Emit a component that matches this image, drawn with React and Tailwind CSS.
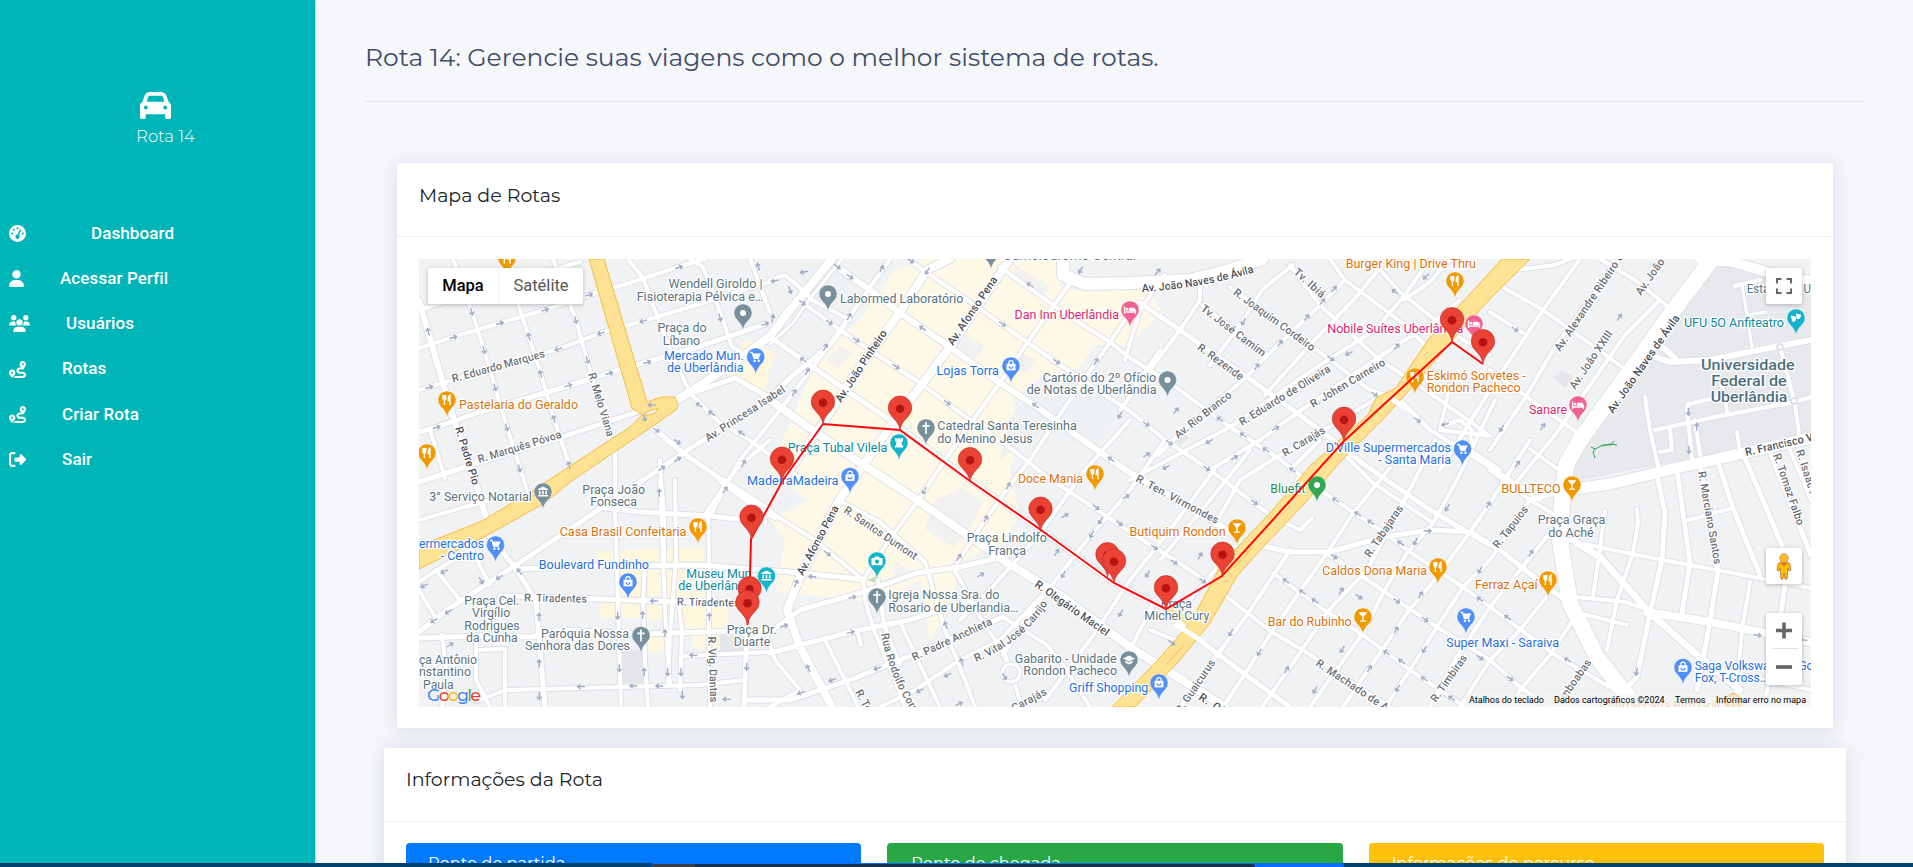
import React from "react";
import { FaCar, FaGaugeHigh, FaUser, FaUsers, FaRoute, FaRightFromBracket } from "react-icons/fa6";

const menu = [
  { icon: FaGaugeHigh, label: "Dashboard", gap: "pl-[91px]", size: "w-[17px]" },
  { icon: FaUser, label: "Acessar Perfil", gap: "pl-[60px]", size: "w-[15px]" },
  { icon: FaUsers, label: "Usuários", gap: "pl-[66px]", size: "w-[21px]" },
  { icon: FaRoute, label: "Rotas", gap: "pl-[62px]", size: "w-[17px]" },
  { icon: FaRoute, label: "Criar Rota", gap: "pl-[62px]", size: "w-[17px]" },
  { icon: FaRightFromBracket, label: "Sair", gap: "pl-[62px]", size: "w-[17px]" },
];

/* [width, points] */
const roads = [
  [4, "419,310 470,294 580,262"],
  [4, "419,348 453,337 500,323 545,310 589,295 623,285 678,267 705,259"],
  [4, "419,390 452,380 558,349 601,333 643,321 690,307 743,290 770,282"],
  [5, "419,432 437,427 477,413 568,386 609,373 647,362 710,343 765,324"],
  [5, "419,482 477,463 562,437 643,410"],
  [4, "419,520 490,500"],
  [6, "419,300 428,332 443,383 458,433 475,480 489,528"],
  [4, "453,259 472,312 484,350 495,387 507,427 520,468 530,500"],
  [4, "503,259 529,337 541,374 554,419 571,470"],
  [4, "553,259 576,320 587,360 610,440"],
  [4, "628,259 643,278 665,338 690,393"],
  [4, "690,259 703,267 722,317 732,347 752,358"],
  [4, "750,259 770,312"],
  [4, "430,430 445,478"],
  [8, "672,403 690,392 735,362 770,336 790,310 832,259"],
  [3, "770,344 792,324 812,296 842,259"],
  [5, "690,393 715,385 735,378 765,395 800,420"],
  [4, "690,393 720,423 745,437 770,455 800,478"],
  [5, "652,427 683,453 715,475 770,510"],
  [5, "419,632 450,608 513,567 603,507 683,453 770,398 790,378 830,345 845,325"],
  [4, "615,451 615,510 617,570 619,640 621,707"],
  [4, "660,460 661,480 664,513 664,565"],
  [5, "599,507 640,512 710,516 765,522"],
  [5, "515,569 600,566 700,565 790,572 850,578 863,580"],
  [5, "487,533 513,565 536,600 540,650 545,707"],
  [4, "470,545 482,570 490,585"],
  [4, "419,582 437,570 470,550"],
  [4, "419,590 437,620"],
  [4, "436,570 460,600"],
  [5, "500,596 600,599 680,602 740,603"],
  [5, "419,638 480,636 530,637 560,630 640,634 770,630"],
  [4, "442,635 446,670 442,707"],
  [4, "476,640 476,680 490,707"],
  [4, "476,650 505,649 505,707"],
  [4, "480,700 505,690 580,688 700,685 745,680"],
  [4, "645,565 643,600 645,660 648,707"],
  [4, "660,480 663,560 666,630 668,660 670,685"],
  [4, "675,480 676,560 670,635 668,685"],
  [4, "708,510 709,560 709,630 710,707"],
  [4, "683,656 770,652"],
  [4, "680,690 682,630 678,600"],
  [4, "706,513 735,470 770,440"],
  [5, "748,625 746,655 744,707"],
  [4, "765,630 775,660 800,690"],
  [6, "720,480 760,510 775,517"],
  [5, "745,700 790,700 850,680 913,655 1003,617"],
  [5, "745,642 770,632 800,610 860,593 917,573 960,567 1003,557"],
  [5, "770,653 850,632 910,620 970,600"],
  [4, "770,707 800,690"],
  [6, "837,267 870,290 900,313 950,347 1000,383 1037,407 1097,450 1130,473 1143,480 1217,523 1240,540"],
  [4, "803,303 840,330 897,368 920,383 973,422 1013,450 1047,477 1090,505 1130,532 1190,570 1227,597 1273,633 1303,650 1363,690 1390,707"],
  [5, "770,337 813,367 850,393 887,418 970,480 1041,530 1114,583 1166,609 1190,633 1243,673 1290,707"],
  [8, "770,400 815,432 860,463 887,480 920,502 1003,560 1063,597 1130,647 1225,707"],
  [4, "913,263 970,302 1027,342 1060,365 1100,392 1130,411 1165,440 1210,470 1270,515 1300,530"],
  [4, "1000,267 1070,317 1110,342 1130,358 1170,383 1230,427 1277,457 1300,475"],
  [4, "770,512 815,540 863,580"],
  [4, "840,501 880,522 925,562 945,630 965,680 975,707"],
  [4, "953,567 980,617 1005,655 1010,680"],
  [4, "1003,617 1047,645 1065,668 1090,707"],
  [8, "950,259 927,270 900,312 853,377 823,423 783,480"],
  [8, "1010,259 950,347 903,410 883,437 860,470 838,502 800,577 787,610 800,647 832,707"],
  [4, "890,259 840,330 813,367 780,410 740,460 710,516"],
  [4, "1070,283 1027,343 1000,383 973,420 947,457 917,502 887,543 863,580"],
  [4, "1127,317 1110,342 1063,410 1030,460 1010,485 983,523 957,563"],
  [4, "850,320 812,300 805,292 785,275 770,280"],
  [4, "863,580 865,600 874,630 895,680 905,707"],
  [4, "878,580 884,625 900,665"],
  [4, "900,622 920,665 940,707"],
  [4, "825,640 850,690 858,707"],
  [4, "857,630 861,645"],
  [4, "1130,420 1085,470 1040,533 990,590 960,620"],
  [4, "1165,440 1130,490 1087,540 1025,620 1003,655"],
  [4, "1214,470 1170,530 1130,580 1090,640 1045,700"],
  [4, "1240,540 1215,570 1190,600"],
  [4, "1047,590 1000,640 960,660 915,690 880,707"],
  [4, "1005,655 1020,700"],
  [12, "1063,259 1063,275 1085,284 1130,283 1190,280 1230,270 1262,259"],
  [5, "1140,303 1180,330 1247,377 1297,413 1333,440 1365,465 1430,510 1490,545"],
  [4, "1200,287 1200,300 1180,330 1150,370 1120,410"],
  [4, "1230,287 1317,350 1370,390 1400,400 1430,430 1490,467 1540,500"],
  [4, "1202,305 1265,353"],
  [4, "1290,265 1320,305 1363,345 1380,360 1410,380 1440,400 1490,436"],
  [4, "1330,259 1345,280 1405,325 1430,350"],
  [4, "1370,259 1400,292 1433,318 1455,340"],
  [4, "1125,360 1140,310 1165,275"],
  [4, "1293,265 1262,290 1240,325 1210,365"],
  [4, "1345,280 1320,305 1280,343 1243,380 1180,433 1158,455"],
  [4, "1378,270 1358,295 1310,345 1265,395"],
  [4, "1430,259 1405,295 1375,330 1320,365 1230,427 1130,480"],
  [4, "1460,300 1430,325 1400,343 1297,413 1260,440 1210,470"],
  [4, "1450,259 1430,282 1404,300"],
  [4, "1382,395 1333,425 1277,457 1240,480 1215,525"],
  [4, "1160,350 1130,395"],
  [4, "1490,355 1455,335"],
  [4, "1250,450 1210,500 1160,560"],
  [4, "1300,475 1290,495 1260,530"],
  [5, "1258,545 1290,552 1330,552 1383,537 1430,530 1470,532 1500,550 1548,588 1570,603"],
  [4, "1273,573 1327,612 1363,635 1410,670 1465,707"],
  [4, "1327,553 1363,577 1407,607 1437,627 1490,660 1520,687 1550,707"],
  [4, "1320,490 1380,530 1410,552 1463,587 1490,607 1555,655 1620,693"],
  [4, "1340,450 1373,483 1433,523"],
  [4, "1390,468 1353,513 1327,553 1273,630 1243,677 1223,707"],
  [4, "1435,440 1403,503 1367,570 1327,612 1300,653 1262,707"],
  [4, "1495,400 1457,480 1433,523 1407,553 1383,593 1363,633 1310,707"],
  [4, "1530,440 1490,503 1470,532 1437,577 1407,613 1380,653 1343,707"],
  [4, "1530,500 1490,560 1463,587 1437,627 1410,670 1385,707"],
  [4, "1560,520 1520,570 1490,607 1455,660 1430,707"],
  [4, "1548,595 1520,630 1490,660 1460,707"],
  [4, "1573,620 1550,655 1520,690 1510,707"],
  [4, "1290,550 1247,615 1217,655 1180,707"],
  [4, "1150,630 1175,640 1190,633"],
  [4, "1155,600 1130,650"],
  [4, "1300,530 1312,518"],
  [4, "1320,440 1290,470"],
  [4, "1450,385 1440,430 1490,436"],
  [4, "1440,430 1445,425 1460,420 1472,430 1470,450 1500,470"],
  [4, "1580,259 1543,310 1490,390 1440,470"],
  [4, "1620,259 1600,285 1553,350 1527,395 1490,450"],
  [4, "1660,300 1625,335 1590,385 1555,435 1510,490"],
  [4, "1490,280 1543,310 1625,369"],
  [4, "1600,259 1635,280 1670,308"],
  [4, "1490,312 1523,333"],
  [4, "1490,370 1527,397 1578,433"],
  [4, "1530,449 1567,476"],
  [4, "1490,470 1530,500 1560,518 1577,543"],
  [4, "1515,270 1555,265 1570,259"],
  [16, "1712,259 1670,315 1620,385 1580,440 1566,465 1562,500 1560,540 1570,603 1597,657 1640,712"],
  [10, "1700,259 1733,262 1780,276 1811,281"],
  [11, "1566,490 1610,484 1677,468 1811,438"],
  [5, "1530,500 1566,490"],
  [6, "1650,355 1670,362 1710,360 1780,346 1811,340"],
  [6, "1660,345 1675,358"],
  [4, "1780,346 1790,385 1795,405 1800,440"],
  [4, "1795,402 1811,397"],
  [4, "1735,286 1760,280"],
  [3, "1742,285 1747,315 1752,347"],
  [3, "1747,315 1766,312"],
  [4, "1645,397 1650,430 1660,475"],
  [4, "1655,430 1720,416 1795,402"],
  [4, "1687,410 1688,404 1725,396 1720,380"],
  [4, "1687,410 1692,460"],
  [4, "1670,430 1672,450 1660,452"],
  [4, "1695,420 1700,455"],
  [4, "1737,432 1740,452"],
  [4, "1725,395 1727,413"],
  [7, "1577,543 1600,557 1650,613 1703,660 1740,690"],
  [8, "1647,612 1710,622 1811,642"],
  [4, "1567,540 1603,548 1663,560 1717,570 1770,580 1811,588"],
  [4, "1577,597 1625,602 1643,608"],
  [4, "1583,614 1627,625"],
  [4, "1605,511 1600,548 1593,597"],
  [4, "1637,509 1638,523 1633,553 1617,600 1607,650"],
  [5, "1657,475 1665,513 1662,560 1650,613 1637,677 1620,695"],
  [5, "1677,470 1690,563 1682,613"],
  [4, "1685,521 1733,508"],
  [5, "1700,464 1718,570 1710,622 1697,690"],
  [5, "1718,462 1733,508 1760,575"],
  [5, "1745,458 1784,550 1785,585 1777,640"],
  [5, "1770,452 1811,555"],
  [4, "1750,582 1742,630 1735,707"],
  [4, "1790,450 1811,500"],
  [4, "1700,665 1765,680 1811,690"],
  [4, "1770,680 1763,707"],
];

const tileArrows = [
  [410, 250, [[807,52,-17],[405,180,-17],[270,220,-17],[130,262,-17],[445,297,163],[573,250,163],[700,213,163],[537,135,-17],[475,407,-17],[598,370,-17],[712,337,-17],[58,412,-17],[55,245,-106],[185,185,73],[222,300,73],[255,412,73],[290,532,73],[328,655,73],[357,260,-106],[392,372,-106],[432,507,-106],[477,645,-106],[497,210,73],[532,330,73],[930,203,73],[1045,50,-106],[1065,222,-17],[80,532,-17],[725,465,180],[703,503,73],[755,655,-35],[868,465,-145],[905,490,-145],[738,540,35],[802,575,35],[803,628,-35],[995,550,-145],[1000,640,-60]]],
  [770, 250, [[102,66,170],[14,92,170],[60,120,70],[8,205,-80],[202,50,35],[240,80,35],[97,158,35],[178,217,35],[258,270,35],[335,57,-60],[422,32,35],[472,63,120],[237,200,-60],[166,292,-60],[112,365,-60],[72,428,-60],[100,330,-145],[378,350,35],[458,235,-145],[780,105,-145],[697,222,35],[860,335,35],[932,60,120],[532,458,35],[797,467,-145],[978,335,-60],[1050,495,120],[1023,628,-145]]],
  [1130, 250, [[83,65,-50],[340,215,120],[450,280,-50],[380,350,-50],[530,203,-50],[577,155,-50],[612,118,-50],[602,325,35],[657,310,155],[800,290,-50],[795,125,-145],[888,80,135],[733,432,35],[862,510,35],[945,523,165],[138,482,-50],[48,522,35],[118,578,35],[270,508,-145],[340,555,-145],[408,600,-145],[238,574,150],[437,535,-30],[108,652,150],[313,623,-30],[50,615,-30],[230,655,35],[488,660,-145]]],
  [1490, 250, [[388,202,-57],[75,237,35],[158,530,-57],[35,535,123],[82,642,-57],[595,485,90],[620,530,-90],[597,600,90]]],
  [410, 480, [[103,275,155],[43,317,155],[115,395,150],[72,422,150],[213,302,60],[268,292,150],[328,275,-125],[120,495,-30],[387,410,-90],[388,550,-90],[388,648,90],[623,407,90],[698,405,-90],[628,565,90],[703,575,-90],[513,620,180],[670,618,180],[748,618,180],[850,526,180],[765,460,-90],[773,577,90],[813,577,90],[817,645,90],[898,410,-90],[732,363,180],[950,658,180],[1010,560,90],[748,38,-90],[945,30,-55]]],
  [770, 480, [[172,220,35],[127,290,-175],[78,310,-65],[247,352,-15],[242,457,-15],[42,438,-15],[115,565,-115],[187,600,160],[93,638,160],[323,565,160],[463,32,120],[647,117,-60],[567,232,-60],[715,18,-60],[632,285,-30],[880,283,120],[860,217,-60],[527,436,-110],[575,545,-110],[533,585,155],[450,632,155],[567,672,-25],[885,107,-30],[978,82,35],[1048,130,35],[965,163,120],[992,122,120],[1068,50,-30],[1052,400,120],[703,590,60]]],
  [1130, 480, [[373,67,35],[73,202,35],[132,246,35],[218,302,35],[53,282,120],[210,228,-60],[125,488,35],[303,458,120],[388,517,120],[470,570,-60],[555,630,120],[617,60,-145],[683,102,-145],[722,127,-145],[893,153,0],[812,190,-145],[857,185,120],[952,83,120],[1075,75,-60],[612,230,35],[468,303,-145],[517,336,-145],[555,363,-145],[633,333,-60],[687,350,35],[800,362,35],[872,345,-60],[885,418,35],[798,450,-60],[637,508,120],[718,566,-60],[770,518,-145],[815,545,-145],[883,508,120],[883,597,-145],[803,625,120],[1050,270,120],[1050,358,-145],[1050,533,35],[965,655,-145]]],
  [1490, 480, [[123,220,-57],[53,413,-145],[233,540,-145],[60,595,35],[440,575,100],[803,465,8],[940,480,-172]]],
];

const GREY = "#78909c", BLUE = "#4f8ff7", ORANGE = "#f29900", TEAL = "#12b5cb", PINK = "#f06292", GREEN = "#34a853";
const pins = [
  [507,258.5,ORANGE,"food"],[447,400,ORANGE,"food"],[427,453,ORANGE,"food"],[755.7,357,BLUE,"cart"],[743,313,GREY,"dot"],
  [828,294,GREY,"dot"],[991,252,GREY,"dot"],[1130,310,PINK,"bed"],[1011,366,BLUE,"bag"],[926,428,GREY,"cross"],[899,443,TEAL,"castle"],
  [850,476.5,BLUE,"bag"],[1095,474,ORANGE,"food"],[1167.5,380,GREY,"dot"],[1455,281,ORANGE,"food"],[1474,324,PINK,"bed"],[1415,377,ORANGE,"food"],
  [1462.5,449,BLUE,"cart"],[1317,485,GREEN,"dot"],[1578,405,PINK,"bed"],[1796,318,TEAL,"mask"],[543,492,GREY,"museum"],[495.5,545,BLUE,"cart"],
  [698,527,ORANGE,"food"],[628,582,BLUE,"bag"],[766.5,576,TEAL,"museum"],[641,635.5,GREY,"cross"],[877,561,TEAL,"camera"],[877,597,GREY,"cross"],
  [1129,660,GREY,"cap"],[1237,528,ORANGE,"glass"],[1159,683,BLUE,"bag"],[1363,617,ORANGE,"glass"],[1438,567,ORANGE,"food"],[1466,617,BLUE,"cart"],
  [1572,485,ORANGE,"glass"],[1548,580,ORANGE,"food"],[1683,667.5,BLUE,"bag"],[1733,702,ORANGE,"food"],
];

const glyphs = {
  dot: <circle r="3" fill="#fff" />,
  food: <path d="M-4-5v3.2c0 1 .6 1.7 1.4 1.9V5M-1.2-5v3.2c0 1-.6 1.7-1.4 1.9M-2.6-5v4M3 5V-4.8C1.6-4 1.2-2 1.2.6H3" fill="none" stroke="#fff" strokeWidth="1.4" />,
  cart: <g fill="none" stroke="#fff" strokeWidth="1.3"><path d="M-5.5-4.5h2l2 5.8h4.8" /><path d="M-2.8-2.8h7l-1.4 3h-4.8z" fill="#fff" /><circle cx="-1" cy="3.8" r=".6" /><circle cx="3" cy="3.8" r=".6" /></g>,
  bag: <g><path d="M-4.5-2.2h9v6.6h-9z" fill="#fff" /><path d="M-2.2-2v-1.2a2.2 2.2 0 0 1 4.4 0V-2" fill="none" stroke="#fff" strokeWidth="1.2" /><path d="M-2 .2a2 2 0 0 0 4 0" fill="none" stroke={BLUE} strokeWidth="1.1" /></g>,
  cross: <path d="M0-6V6M-3.6-2.2h7.2" stroke="#fff" strokeWidth="1.7" />,
  bed: <g><path d="M-5.5-3.5V4M-5.5 2H5.5M5.5 4V0" stroke="#fff" strokeWidth="1.3" fill="none" /><circle cx="-3" cy="-.8" r="1.4" fill="#fff" /><path d="M-1-2.3h4.5a2 2 0 0 1 2 2V1H-1z" fill="#fff" /></g>,
  castle: <path d="M-4-5h1.8v1.3h1.3V-5H.9v1.3h1.3V-5H4v3.5H2.6L3 2.5H4.2V4.6H-4.2V2.5H-3l.4-4H-4z" fill="#fff" />,
  museum: <path d="M0-5.5l5 2.6v1H-5v-1zM-4-1.2h1.6v3.6H-4zM-.8-1.2H.8v3.6H-.8zM2.4-1.2H4v3.6H2.4zM-5 3H5v1.6H-5z" fill="#fff" />,
  camera: <g><path d="M-5.5-3h2.7l1-1.5h3.6l1 1.5h2.7V4.2h-11z" fill="#fff" /><circle cy=".6" r="2.1" fill={TEAL} /></g>,
  mask: <g fill="#fff"><path d="M-.2-4.5L5-3.6C5 0 3.6 1.4 1 1z" /><path d="M-5.2-2.4L.4-1.2C.4 2.6-1 4.8-3.8 3.6z" /></g>,
  cap: <path d="M0-4.5l6 3-6 3-6-3zM-3.6.6L0 2.4 3.6.6v2.2L0 4.6l-3.6-1.8z" fill="#fff" />,
  glass: <path d="M-4.5-4.8h9L.7-.2V3.4h2.2v1.3h-5.8V3.4h2.2V-.2z" fill="#fff" />,
};

const C = { g: "#5b7380", b: "#1f70e0", o: "#d9730d", t: "#0d8a99", p: "#e0246f", v: "#1e8e4a" };
/* [colour, x, baseline, width, text] */
const labels = [
  ["g",668.5,288.3,94,"Wendell Giroldo |"],["g",636.7,300.7,126.5,"Fisioterapia Pélvica e…"],["g",657.5,332,49,"Praça do"],["g",662.7,344.5,37.5,"Líbano"],
  ["b",664,360,79.5,"Mercado Mun."],["b",667,372,76.5,"de Uberlândia"],["o",459,409,119,"Pastelaria do Geraldo"],
  ["g",840,302.5,123.5,"Labormed Laboratório"],["g",1003,259.5,133,"Camelódromo Central"],["p",1014.5,318.7,104.5,"Dan Inn Uberlândia"],["b",936.5,375,62.3,"Lojas Torra"],
  ["g",1042.7,381.7,113.5,"Cartório do 2º Ofício"],["g",1026.7,394.3,130,"de Notas de Uberlândia"],["g",937.3,430.3,139.5,"Catedral Santa Teresinha"],["g",937.3,442.7,95.5,"do Menino Jesus"],
  ["t",787.7,451.7,99.7,"Praça Tubal Vilela"],["b",747,485,91.5,"MadeiraMadeira"],["o",1018,482.5,65,"Doce Mania"],
  ["o",1345.7,268.3,130.3,"Burger King | Drive Thru"],["p",1327.3,332.7,136,"Nobile Suítes Uberlândia"],["o",1426.7,379.5,99,"Eskimó Sorvetes -"],["o",1426.7,391.7,94,"Rondon Pacheco"],
  ["b",1325.7,452,125.3,"D'Ville Supermercados"],["b",1378.3,464.3,72.7,"- Santa Maria"],["p",1529,414.3,38,"Sanare"],["t",1684,326.7,100,"UFU 5O Anfiteatro"],["g",1746.7,293,78,"Estádio da UFU"],
  ["g",429.3,501,102.4,"3° Serviço Notarial"],["g",582.3,494,62.7,"Praça João"],["g",590.3,506.3,46.7,"Fonseca"],["o",559.7,536,126.6,"Casa Brasil Confeitaria"],
  ["b",419,547.7,65,"ermercados"],["b",440.7,560,43.3,"- Centro"],["b",538.7,569,110.3,"Boulevard Fundinho"],["t",686.3,578,68.4,"Museu Mun."],["t",678.3,590.3,76.5,"de Uberlândia"],
  ["g",464.3,604.7,55,"Praça Cel."],["g",472,617.3,38.3,"Virgílio"],["g",464.3,629.7,55.4,"Rodrigues"],["g",466,642.3,51.7,"da Cunha"],["g",541,638,88,"Paróquia Nossa"],["g",525,650.3,105,"Senhora das Dores"],
  ["g",419,664,58,"ça Antônio"],["g",419,676.3,52,"nstantino"],["g",423,688.7,30.7,"Paula"],["g",726.7,634,50,"Praça Dr."],["g",733.7,646.3,36.5,"Duarte"],
  ["g",966.7,542,80.3,"Praça Lindolfo"],["g",988.3,554.7,37.7,"França"],["g",888.3,599.3,111,"Igreja Nossa Sra. do"],["g",888.3,612,130,"Rosario de Uberlandia…"],
  ["g",1014.7,662.7,102,"Gabarito - Unidade"],["g",1023.3,675,93.7,"Rondon Pacheco"],["b",1069,691.5,79.3,"Griff Shopping"],
  ["v",1270.3,492.7,35,"Bluefit"],["o",1129.5,536.3,96.2,"Butiquim Rondon"],["g",1160.7,607.7,31.3,"Praça"],["g",1144.3,619.7,65,"Michel Cury"],
  ["o",1322.3,575,104.7,"Caldos Dona Maria"],["o",1267.7,626,84,"Bar do Rubinho"],["b",1446.3,646.7,112.7,"Super Maxi - Saraiva"],["o",1475,588.7,62.7,"Ferraz Açaí"],
  ["o",1501.3,492.7,59.4,"BULLTECO"],["g",1537.7,524.3,67.6,"Praça Graça"],["g",1548.3,536.7,45.4,"do Aché"],["b",1694.7,670,124,"Saga Volkswagen - Gol,"],["b",1694.7,682.3,73.3,"Fox, T-Cross…"],
  ["o",1600,710,120,"Churrascaria Rim Grill"],
];

/* [x, y, angle, width, text, major] */
const streets = [
  [453,382.5,-15.5,96,"R. Eduardo Marques"],[588,374,73,66,"R. Melo Viana"],[479,463,-17,87,"R. Marquês Póvoa"],[708,442,-33,93,"Av. Princesa Isabel"],[455,428,73,60,"R. Padre Pio",1],
  [841,403,-56.5,84,"Av. João Pinheiro",1],[953,346,-56,80,"Av. Afonso Pena",1],[1293,273,42,38,"Tv. Ibiá"],[1232.5,294,36,98,"R. Joaquim Cordeiro"],[1200,310,37,78,"Tv. José Camim"],
  [1196.5,349,36,54,"R. Rezende"],[1178,439,-38,69,"Av. Rio Branco"],[1242,426,-31.6,105,"R. Eduardo de Oliveira"],[1313,408,-30.7,85,"R. Johen Carneiro"],[1285,457,-31,48,"R. Carajás"],
  [1560,352,-56,116,"Av. Alexandre Ribeiro G"],[1575,390,-56,68,"Av. João XXIII"],[1641,296,-55,42,"Av. João"],[1613,414,-55,117,"Av. João Naves de Ávila",1],[1746,456,-13,90,"R. Francisco Vicen",1],
  [1698,472,80,94,"R. Marciano Santos"],[1773,455,71,75,"R. Tomaz Falbo"],[1796,451,72,60,"R. Isaac Ara"],[524,601.5,1,63,"R. Tiradentes"],[676.7,605.5,1,63,"R. Tiradentes"],
  [708,636.5,88,66,"R. Vig. Dantas"],[803,576,-62,77,"Av. Afonso Pena",1],[843,512,34,86,"R. Santos Dumont"],[1034,586,35,88,"R. Olegário Maciel",1],[914,661,-25,87,"R. Padre Anchieta"],
  [855,692,62,50,"R. Tenente"],[1014,712,-28,38,"Carajás"],[1135,481,28,92,"R. Ten. Virmondes"],[1370,558,-56,60,"R. Tabajaras"],[1181,714,-56,62,"R. Guaicurus"],[1198,699,33,80,"R. Olegário M",1],
  [1315,665,33.5,96,"R. Machado de Ass"],[1436,703,-55,55,"R. Timbiras"],[1498,549,-52,50,"R. Tapuios"],[1562,705,-55,52,"Emboabas"],
];

const markers = [[1483,364],[1452,342],[1344,441.5],[1222.5,576.5],[1166,610],[1107.5,577],[1114,583.5],[1040.5,531.5],[970,482],[900,430.5],[823,424.5],[782,481.5],[751.5,539.5],[749.5,611],[747.5,625]];

function RouteMap() {
  const shape = "M0 0C-1-7.5-4.5-10-8.4-14.6A11.7 11.7 0 1 1 8.4-14.6C4.5-10 1-7.5 0 0z";
  return (
    <svg className="block h-full w-full" viewBox="419 259 1392 448" fontFamily="Roboto, sans-serif">
      <defs>
        <path id="arrow" d="M-4 0H3M.6-2.2L3.4 0 .6 2.2" fill="none" stroke="#a3abc8" strokeWidth="1.4" />
        <path id="avila" d="M1142 292Q1205 288 1258 271" />
        <path id="carrijo" d="M976 662Q1025 642 1050 600" />
        <path id="rodolfo" d="M881 634Q890 680 914 714" />
      </defs>
      <rect x="419" y="259" width="1392" height="448" fill="#f0f2f4" />
      <path d="M1712 262L1811 285V435L1570 482 1585 435 1645 350Z" fill="#e7e9ed" />
      <path d="M893 272L925 259H1055L1062 290H1148L1162 312 1130 345 1095 345 1068 385 1040 378 1012 400 1022 430 1010 470 1020 515 1000 545 965 560 945 615 930 642 920 580 900 590 870 602 776 592 785 540 770 520 808 500 770 470 800 400 822 350 860 320Z" fill="#fef8e6" />
      <path d="M1040 378l35-10 50 30-30 50-50-18-45 30 5-35zM1020 352l15 8-8 14-14-7zM840 346l12 6-14 16-12-8zM936 500l25-12 22 14-12 25-18 20-28-18zM780 500l12-8 4 6-12 12zM800 270l30-10 20 22-25 32-28-20zM895 560l18 12-20 10zM965 335l20 10-8 14-22-12zM1012 262l18 12 20 12-8 12-25-18z" fill="#eef0f2" opacity=".8" />
      <path d="M598 551l106-4v15l-106 3zM617 570h24v26h-24zM648 570h14v26h-14zM666 570h40v28h-40zM600 603h40v15h-40zM648 604h14v17h-14zM666 604h11v15h-11zM682 604h45v25h-45zM693 635h27v14h-27zM726 378l18-38 30 12-10 42zM648 636h16v16h-16z" fill="#fef6dd" />
      <path d="M620 650h23v33h-23zM720 635h30v16h-30zM1553 378l8-8 12 6-7 12zM1175 440l10-6 4 4-10 7z" fill="#e4e6ea" />
      <path d="M867 580l10-4 2 8z" fill="#bfe3c6" />
      <g fill="none" strokeLinejoin="round" strokeLinecap="round">
        {roads.map(([w, p], i) => <polyline key={i} points={p} stroke="#dcdfe7" strokeWidth={w + 1.8} />)}
        {roads.map(([w, p], i) => <polyline key={i} points={p} stroke="#fff" strokeWidth={w} />)}
        <circle cx="1011" cy="673" r="9" stroke="#d9dce5" strokeWidth="5" fill="#f0f2f4" />
        <circle cx="1011" cy="673" r="9" stroke="#fff" strokeWidth="3.4" />
        <circle cx="1780" cy="347" r="3" stroke="#d9dce5" strokeWidth="1.5" />
        <circle cx="1794" cy="401" r="3" stroke="#d9dce5" strokeWidth="1.5" />
      </g>
      <g strokeLinejoin="round">
        <path d="M589 259H604L647 402 662 397H675L678 404 677 409 650 428 573 480 543 504 484 537 419 569V546L482 521 535 489 630 427 642 415 632 408Z" fill="#fde293" stroke="#f6bb42" strokeWidth="1" />
        <path d="M646 412l12-4-3 5-9 3z" fill="#f0f2f4" stroke="#f6bb42" />
        <path d="M1502 259H1530L1489 300 1466 325 1420 378 1387 415 1340 462 1305 503 1265 545 1237 576 1210 623 1180 660 1135 707H1112L1158 660 1190 623 1215 577 1220 566 1270 513 1310 466 1368 415 1376 398 1396 388 1428 340Z" fill="#fde293" stroke="#f6bb42" strokeWidth="1" />
        <path d="M1161 608l26 17 6-1-5-8-22-9z" fill="#fde293" />
        <path d="M1252 548L1234 568M1184 645L1166 665" stroke="#f6bb42" strokeWidth="1" />
      </g>
      <g fill="none" stroke="#fff" strokeWidth="5"><path d="M1390 398L1412 412M1175 624L1205 643M1130 647L1150 660" /></g>
      <path d="M1591 447l4 2-2 3 2 6M1595 449l8-4h8l3-4M1602 446l8-2 7 1" fill="none" stroke="#2ea455" />
      {tileArrows.map(([ox, oy, list]) => list.map(([x, y, a]) => (
        <use key={`${ox}-${oy}-${x}-${y}`} href="#arrow" transform={`translate(${ox + x / 3} ${oy + y / 3}) rotate(${a})`} />
      )))}
      <g paintOrder="stroke" stroke="#fff" strokeWidth="2.6" strokeLinejoin="round">
        <g fontSize="11" fontWeight="500">
          {streets.map(([x, y, a, w, t, major]) => (
            <text key={t + x} transform={`translate(${x} ${y}) rotate(${a})`} textLength={w} fill={major ? "#4a4e55" : "#6b6f76"}>{t}</text>
          ))}
          <text fill="#4a4e55"><textPath href="#avila" textLength="114">Av. João Naves de Ávila</textPath></text>
          <text fill="#6b6f76"><textPath href="#carrijo" textLength="94">R. Vital José Carrijo</textPath></text>
          <text fill="#6b6f76"><textPath href="#rodolfo" textLength="84">Rua Rodolfo Corr</textPath></text>
        </g>
        <g fontSize="12.5">
          {labels.map(([c, x, y, w, t]) => <text key={t + x} x={x} y={y} textLength={w} lengthAdjust="spacingAndGlyphs" fill={C[c]}>{t}</text>)}
        </g>
        <g fontSize="15.5" fontWeight="500" fill="#4a7080">
          <text x="1701" y="370.3" textLength="93.7" lengthAdjust="spacingAndGlyphs">Universidade</text>
          <text x="1711.3" y="386.3" textLength="75.4" lengthAdjust="spacingAndGlyphs">Federal de</text>
          <text x="1710.7" y="402.3" textLength="76.6" lengthAdjust="spacingAndGlyphs">Uberlândia</text>
        </g>
      </g>
      {pins.map(([x, y, c, k]) => (
        <g key={`${x}-${y}`} transform={`translate(${x} ${y})`}>
          <path d="M0 17.5C-.8 12-3.4 9.6-6.6 6A9 9 0 1 1 6.6 6C3.4 9.6.8 12 0 17.5z" fill={c} stroke="#fff" strokeOpacity=".6" strokeWidth=".6" />
          {glyphs[k]}
        </g>
      ))}
      <polyline points="1483,364 1452,342 1344,441 1222,576 1166,609 1114,583 1041,530 970,481 900,430 823,424 783,480 751,539 749,611 747.5,625" fill="none" stroke="#ff0a0a" strokeWidth="2" />
      {markers.map(([x, y]) => (
        <g key={`${x}-${y}`} transform={`translate(${x} ${y})`}>
          <path d={shape} fill="#ea4335" stroke="#c5322a" strokeWidth=".7" />
          <circle cy="-21.7" r="4.3" fill="#b31412" />
        </g>
      ))}
    </svg>
  );
}

function MapControls() {
  return (
    <>
      <div className="absolute left-[9px] top-[9px] flex h-9 rounded-xs bg-white text-[16.5px] leading-9 shadow-[0_1px_4px_rgba(0,0,0,0.25)]">
        <span className="w-[71px] border-r border-gray-100 text-center font-medium text-black">Mapa</span>
        <span className="w-[84px] text-center text-[#565656]">Satélite</span>
      </div>
      <div className="absolute right-[9px] top-[9px] flex size-9 items-center justify-center rounded-xs bg-white shadow-[0_1px_4px_rgba(0,0,0,0.25)]">
        <svg className="size-4" viewBox="0 0 16 16" fill="none" stroke="#666" strokeWidth="2"><path d="M1 5.500V1h4.500M10.500 1H15v4.500M15 10.500V15h-4.500M5.500 15H1v-4.500" /></svg>
      </div>
      <div className="absolute right-[9px] top-[289px] flex size-9 items-center justify-center rounded-xs bg-white shadow-[0_1px_4px_rgba(0,0,0,0.25)]">
        <svg className="h-[27px] w-4" viewBox="0 0 16 27">
          <path d="M4 9h8l2 2 1 6-2 1-1-3-1 11H9l-1-6-1 6H5L4 15l-1 3-2-1 1-6z" fill="#fbbc04" stroke="#b0773c" strokeWidth=".8" />
          <path d="M4.500 10h7L8 13.500z" fill="#e0792c" />
          <circle cx="8" cy="5" r="4.300" fill="#fbbc2c" stroke="#c58a3a" strokeWidth=".7" />
        </svg>
      </div>
      <div className="absolute right-[9px] top-[354px] flex h-[72px] w-9 flex-col items-center rounded-xs bg-white shadow-[0_1px_4px_rgba(0,0,0,0.25)]">
        <svg className="h-[35px] w-4" viewBox="0 0 16 35"><path d="M0 17.500h16M8 9.500v16" stroke="#666" strokeWidth="3.600" /></svg>
        <div className="h-px w-[27px] bg-[#e3e3e3]" />
        <svg className="h-9 w-4" viewBox="0 0 16 36"><path d="M0 18h16" stroke="#666" strokeWidth="3.600" /></svg>
      </div>
      <div className="absolute bottom-0 left-[8px] font-['Montserrat',sans-serif] text-[17.500px] font-medium leading-[25px] tracking-[-1.9px] [text-shadow:0_0_2px_white,0_0_2px_white]">
        <span className="text-[#4285f4]">G</span><span className="text-[#ea4335]">o</span><span className="text-[#fbbc05]">o</span><span className="text-[#4285f4]">g</span><span className="text-[#34a853]">l</span><span className="text-[#ea4335]">e</span>
      </div>
      <div className="absolute bottom-0 right-0 flex h-[13px] items-center gap-[11px] bg-[#f5f5f5]/75 pl-[4px] pr-[5px] text-[9px] leading-[13px] text-black">
        <span className="w-[74px] whitespace-nowrap">Atalhos do teclado</span>
        <span className="w-[110px] whitespace-nowrap">Dados cartográficos ©2024</span>
        <span className="w-[30px] whitespace-nowrap">Termos</span>
        <span className="w-[90px] whitespace-nowrap">Informar erro no mapa</span>
      </div>
    </>
  );
}

const card = "rounded-xs bg-white shadow-[0_1px_15px_1px_rgba(62,57,107,0.07),0_4px_26px_4px_rgba(62,57,107,0.05)]";
const heading = "font-['Montserrat',Inter,sans-serif] font-normal";

export default function App() {
  return (
    <div className="flex h-[867px] flex-col overflow-hidden bg-[#f5f7fb] font-[Roboto,sans-serif]">
      <div className="flex h-[863px] shrink-0 overflow-hidden">
        <aside className="w-[315px] shrink-0 bg-[#00b5b8] pt-[91px] text-white shadow-[1px_0_2px_rgba(0,0,0,0.2)]">
          <div className="flex flex-col pl-[136px]">
            <FaCar className="-mt-px ml-[4px] h-[31px] w-[31px]" />
            <span className="mt-[3px] whitespace-nowrap font-['Montserrat',Inter,sans-serif] text-[16.5px] font-light leading-6">Rota 14</span>
          </div>
          <nav className="mt-[63px] flex flex-col">
            {menu.map(({ icon: Icon, label, gap, size }) => (
              <a key={label} className={"relative flex h-[45.200px] items-center text-[17px] font-medium tracking-[0.100px] " + gap}>
                <Icon className={"absolute left-[9px] h-[17px] " + size} />
                {label}
              </a>
            ))}
          </nav>
        </aside>
        <main className="min-w-0 flex-1 pl-[50px]">
          <div className="mr-[49px] flex h-[102px] items-center border-b border-[#e2e5ea] pt-[14px]">
            <h1 className={heading + " whitespace-nowrap text-[25px] text-[#404e67]"}>Rota 14: Gerencie suas viagens como o melhor sistema de rotas.</h1>
          </div>
          <section className={card + " ml-[32px] mr-[80px] mt-[61px] h-[565px]"}>
            <h2 className={heading + " flex h-[74px] items-center border-b border-[#eceef1] px-[22px] pb-[6px] text-[19px] text-[#212529]"}>Mapa de Rotas</h2>
            <div className="px-[22px] pt-[22px]">
              <div className="relative h-[448px] overflow-hidden">
                <RouteMap />
                <MapControls />
              </div>
            </div>
          </section>
          <section className={card + " ml-[19px] mr-[67px] mt-[20px] h-[300px]"}>
            <h2 className={heading + " flex h-[74px] items-center border-b border-[#eceef1] px-[22px] pb-[8px] text-[19px] text-[#212529]"}>Informações da Rota</h2>
            <div className={heading + " grid grid-cols-3 gap-[26px] px-[22px] pt-[21px] text-[16.250px] text-white"}>
              <div className="h-40 rounded-[4px] bg-[#007bff] px-[22px] pt-[8px]">Ponto de partida</div>
              <div className="h-40 rounded-[4px] bg-[#28a745] px-[24px] pt-[8px]">Ponto de chegada</div>
              <div className="h-40 rounded-[4px] bg-[#ffc107] px-[23px] pt-[8px]">Informações do percurso</div>
            </div>
          </section>
        </main>
      </div>
      <div className="flex h-1 bg-[#03406e] pl-[652px]">
        <div className="flex w-[692px] overflow-hidden rounded-tr-[4px] border-t border-[#0a6cff] bg-[#0a6cff]">
          <div className="w-[43px] rounded-tl-[3px] bg-[#3a3f45]" />
          <div className="w-[560px] rounded-tr-[3px] bg-[#15304d]" />
        </div>
      </div>
    </div>
  );
}
